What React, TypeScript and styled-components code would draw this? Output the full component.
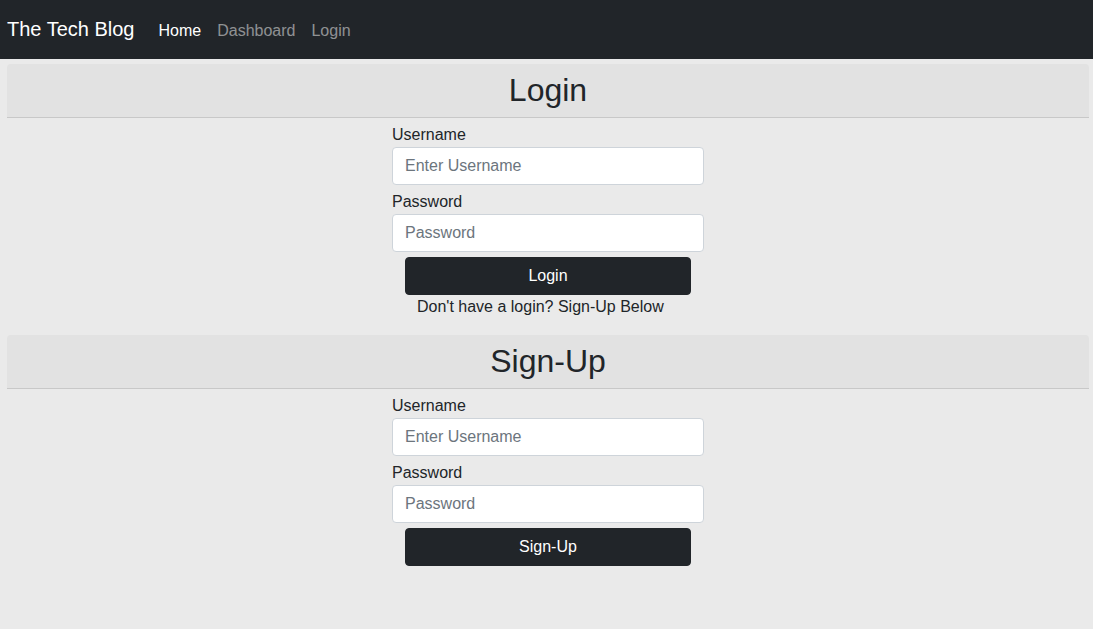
import React from "react";
import styled, { createGlobalStyle } from "styled-components";

const GlobalStyle = createGlobalStyle`
  body {
    margin: 0;
    background: #eaeaea;
    font-family: "Liberation Sans", Arial, sans-serif;
    color: #212529;
  }
  * { box-sizing: border-box; }
`;

const Navbar = styled.nav`
  display: flex;
  align-items: center;
  height: 59px;
  padding: 0 7px;
  background: #212529;
`;

const Brand = styled.a`
  font-size: 20px;
  color: #fff;
  margin-right: 16px;
  text-decoration: none;
  margin-top: -1px;
`;

const NavLink = styled.a<{ $active?: boolean }>`
  font-size: 16px;
  padding: 2px 8px 0;
  color: ${(p) => (p.$active ? "#fff" : "rgba(255,255,255,0.5)")};
  text-decoration: none;
`;

const Main = styled.main`
  padding: 5px 4px 0 7px;
`;

const Section = styled.section`
  margin-bottom: 16px;
`;

const Header = styled.h1`
  margin: 0;
  height: 54px;
  line-height: 53px;
  font-size: 32px;
  font-weight: 400;
  text-align: center;
  background: #e2e2e2;
  border-bottom: 1px solid #c8c8c8;
  border-radius: 4px 4px 0 0;
`;

const Form = styled.form`
  width: 312px;
  margin: 0 auto;
`;

const Group = styled.div`
  margin-top: 5px;
`;

const Label = styled.label`
  display: block;
  font-size: 16px;
  line-height: 24px;
`;

const Input = styled.input`
  display: block;
  width: 100%;
  height: 38px;
  padding: 6px 12px;
  font-size: 16px;
  font-family: inherit;
  color: #495057;
  background: #fff;
  border: 1px solid #ced4da;
  border-radius: 4px;
  &::placeholder {
    color: #6c757d;
  }
`;

const Button = styled.button`
  display: block;
  width: calc(100% - 26px);
  height: 38px;
  margin: 5px 13px 0;
  font-size: 16px;
  font-family: inherit;
  color: #fff;
  background: #212529;
  border: 1px solid #212529;
  border-radius: 4px;
`;

const Note = styled.p`
  margin: 0 0 0 25px;
  font-size: 16px;
  line-height: 24px;
`;

function AuthForm({ button, note }: { button: string; note?: string }) {
  return (
    <Form onSubmit={(e) => e.preventDefault()}>
      <Group>
        <Label>Username</Label>
        <Input type="text" placeholder="Enter Username" />
      </Group>
      <Group>
        <Label>Password</Label>
        <Input type="password" placeholder="Password" />
      </Group>
      <Button type="submit">{button}</Button>
      {note && <Note>{note}</Note>}
    </Form>
  );
}

export default function App() {
  return (
    <>
      <GlobalStyle />
      <Navbar>
        <Brand>The Tech Blog</Brand>
        <NavLink $active>Home</NavLink>
        <NavLink>Dashboard</NavLink>
        <NavLink>Login</NavLink>
      </Navbar>
      <Main>
        <Section>
          <Header>Login</Header>
          <AuthForm button="Login" note="Don't have a login? Sign-Up Below" />
        </Section>
        <Section>
          <Header>Sign-Up</Header>
          <AuthForm button="Sign-Up" />
        </Section>
      </Main>
    </>
  );
}
